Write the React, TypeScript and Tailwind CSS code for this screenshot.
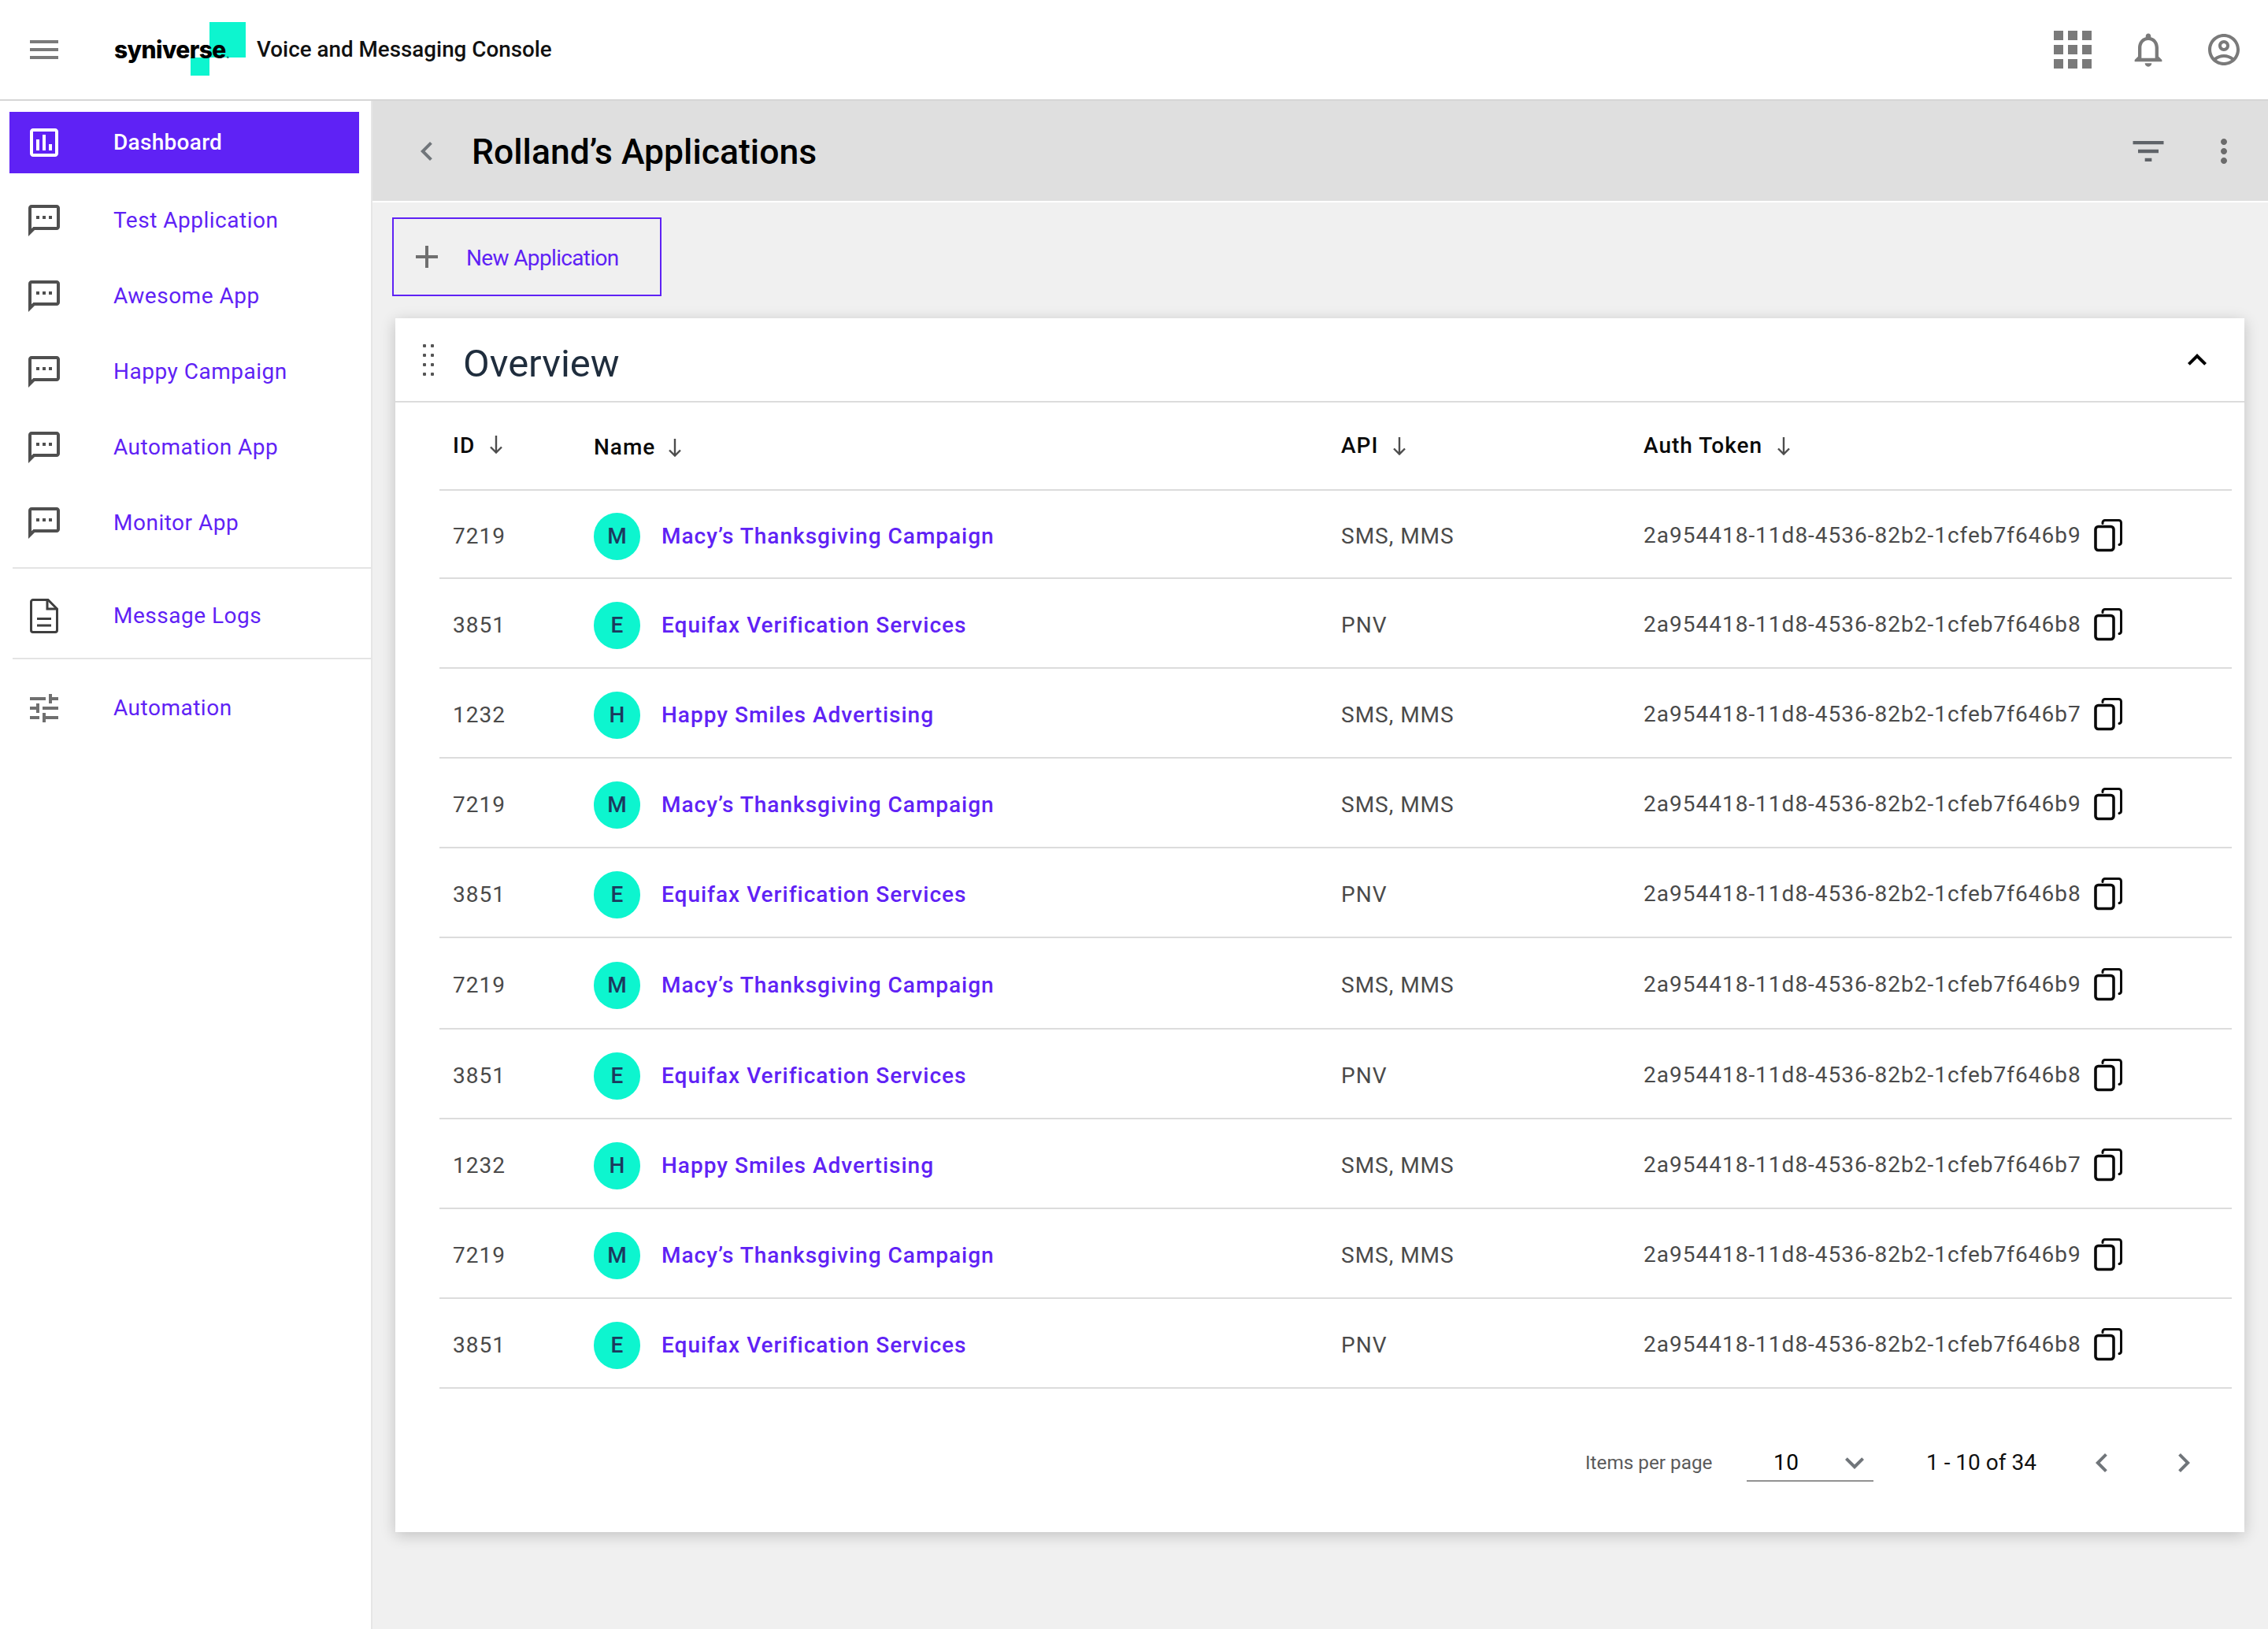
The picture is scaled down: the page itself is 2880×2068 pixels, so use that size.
import React from "react";

const P = {
  menu: "M3 18h18v-2H3v2zm0-5h18v-2H3v2zm0-7v2h18V6H3z",
  chart: "M19 3H5c-1.1 0-2 .9-2 2v14c0 1.1.9 2 2 2h14c1.1 0 2-.9 2-2V5c0-1.1-.9-2-2-2zm0 16H5V5h14v14zM7 10h2v7H7zm4-3h2v10h-2zm4 6h2v4h-2z",
  sms: "M20 2H4c-1.1 0-1.99.9-1.99 2L2 22l4-4h14c1.1 0 2-.9 2-2V4c0-1.1-.9-2-2-2zm0 14H5.17L4 17.17V4h16v12zM7 9h2v2H7zm4 0h2v2h-2zm4 0h2v2h-2z",
  tune: "M3 17v2h6v-2H3zM3 5v2h10V5H3zm10 16v-2h8v-2h-8v-2h-2v6h2zM7 9v2H3v2h4v2h2V9H7zm14 4v-2H11v2h10zm-6-4h2V7h4V5h-4V3h-2v6z",
  apps: "M4 8h4V4H4v4zm6 12h4v-4h-4v4zm-6 0h4v-4H4v4zm0-6h4v-4H4v4zm6 0h4v-4h-4v4zm6-10v4h4V4h-4zm-6 4h4V4h-4v4zm6 6h4v-4h-4v4zm0 6h4v-4h-4v4z",
  bell: "M12 22c1.1 0 2-.9 2-2h-4c0 1.1.9 2 2 2zm6-6v-5c0-3.07-1.63-5.64-4.5-6.32V4c0-.83-.67-1.5-1.5-1.5s-1.5.67-1.5 1.5v.68C7.64 5.36 6 7.92 6 11v5l-2 2v1h16v-1l-2-2zm-2 1H8v-6c0-2.48 1.51-4.5 4-4.5s4 2.02 4 4.5v6z",
  user: "M12 2C6.48 2 2 6.48 2 12s4.48 10 10 10 10-4.48 10-10S17.52 2 12 2zM7.35 18.5C8.66 17.56 10.26 17 12 17s3.34.56 4.65 1.5c-1.31.94-2.91 1.5-4.65 1.5s-3.34-.56-4.65-1.5zm10.79-1.38C16.45 15.8 14.32 15 12 15s-4.45.8-6.14 2.12C4.7 15.73 4 13.95 4 12c0-4.42 3.58-8 8-8s8 3.58 8 8c0 1.95-.7 3.73-1.86 5.12zM12 6c-1.93 0-3.5 1.57-3.5 3.5S10.07 13 12 13s3.5-1.57 3.5-3.5S13.93 6 12 6zm0 5c-.83 0-1.5-.67-1.5-1.5S11.17 8 12 8s1.5.67 1.5 1.5S12.83 11 12 11z",
  filter: "M10 18h4v-2h-4v2zM3 6v2h18V6H3zm3 7h12v-2H6v2z",
  more: "M12 8c1.1 0 2-.9 2-2s-.9-2-2-2-2 .9-2 2 .9 2 2 2zm0 2c-1.1 0-2 .9-2 2s.9 2 2 2 2-.9 2-2-.9-2-2-2zm0 6c-1.1 0-2 .9-2 2s.9 2 2 2 2-.9 2-2-.9-2-2-2z",
  left: "M15.41 7.41L14 6l-6 6 6 6 1.41-1.41L10.83 12z",
  right: "M10 6L8.59 7.41 13.17 12l-4.58 4.59L10 18l6-6z",
  up: "M12 8l-6 6 1.41 1.41L12 10.83l4.59 4.58L18 14z",
  down: "M16.59 8.59L12 13.17 7.41 8.59 6 10l6 6 6-6z",
  plus: "M19 13h-6v6h-2v-6H5v-2h6V5h2v6h6v2z",
};

function Icon({ d, className }: { d: string; className: string }) {
  return (
    <svg viewBox="0 0 24 24" fill="currentColor" className={className}>
      <path d={d} />
    </svg>
  );
}

function SortArrow({ className = "" }: { className?: string }) {
  return (
    <svg viewBox="0 0 18 24" fill="none" stroke="#4d4d4d" strokeWidth="2.4" className={`w-[18px] h-[24px] ${className}`}>
      <path d="M9 1v21M2 15.5l7 7 7-7" />
    </svg>
  );
}

function Copy() {
  return (
    <svg viewBox="0 0 38 42" fill="none" stroke="#0a0a0a" className="w-[38px] h-[42px] shrink-0">
      <rect x="2" y="9.5" width="23" height="30" rx="3.5" strokeWidth="3.6" />
      <path d="M11 5.5V4.5a3 3 0 0 1 3-3h17.5a3 3 0 0 1 3 3v25a3 3 0 0 1-2.5 3" strokeWidth="3" strokeLinecap="round" />
    </svg>
  );
}

function Doc() {
  return (
    <svg viewBox="0 0 36 44" fill="none" stroke="#3f3f3f" strokeWidth="3" className="w-[36px] h-[44px]">
      <path d="M4 1.5h19l11.5 11.5v27a2.5 2.5 0 0 1-2.5 2.5H4A2.5 2.5 0 0 1 1.5 40V4A2.5 2.5 0 0 1 4 1.5z" />
      <path d="M22 1.5V13h12.5M9 25.5h18M9 34h18" />
    </svg>
  );
}

function Grip() {
  return (
    <div className="grid grid-cols-2 gap-x-[6px] gap-y-[8px] w-[14px]">
      {Array.from({ length: 8 }).map((_, i) => (
        <span key={i} className="w-[4px] h-[4px] bg-[#555555] rounded-[1px]" />
      ))}
    </div>
  );
}

function NavItem({ label, icon }: { label: string; icon: React.ReactNode }) {
  return (
    <div className="flex items-center h-[96px]">
      <div className="w-[144px] pl-[32px] shrink-0">{icon}</div>
      <span className="text-[28px] tracking-[0.5px] text-[#5f22f5]">{label}</span>
    </div>
  );
}

const data = [
  ["7219", "M", "Macy’s Thanksgiving Campaign", "SMS, MMS", "2a954418-11d8-4536-82b2-1cfeb7f646b9"],
  ["3851", "E", "Equifax Verification Services", "PNV", "2a954418-11d8-4536-82b2-1cfeb7f646b8"],
  ["1232", "H", "Happy Smiles Advertising", "SMS, MMS", "2a954418-11d8-4536-82b2-1cfeb7f646b7"],
  ["7219", "M", "Macy’s Thanksgiving Campaign", "SMS, MMS", "2a954418-11d8-4536-82b2-1cfeb7f646b9"],
  ["3851", "E", "Equifax Verification Services", "PNV", "2a954418-11d8-4536-82b2-1cfeb7f646b8"],
  ["7219", "M", "Macy’s Thanksgiving Campaign", "SMS, MMS", "2a954418-11d8-4536-82b2-1cfeb7f646b9"],
  ["3851", "E", "Equifax Verification Services", "PNV", "2a954418-11d8-4536-82b2-1cfeb7f646b8"],
  ["1232", "H", "Happy Smiles Advertising", "SMS, MMS", "2a954418-11d8-4536-82b2-1cfeb7f646b7"],
  ["7219", "M", "Macy’s Thanksgiving Campaign", "SMS, MMS", "2a954418-11d8-4536-82b2-1cfeb7f646b9"],
  ["3851", "E", "Equifax Verification Services", "PNV", "2a954418-11d8-4536-82b2-1cfeb7f646b8"],
];

const cols = "grid grid-cols-[196px_949px_384px_1fr] items-center";
const smsIcon = <Icon d={P.sms} className="w-[48px] h-[48px] text-[#4f4f4f]" />;

export default function App() {
  return (
    <div className="w-[2880px] h-[2068px] bg-white font-['Roboto',sans-serif] flex flex-col overflow-hidden">
      <header className="h-[128px] shrink-0 flex items-center border-b-2 border-[#d6d6d6] bg-white">
        <div className="w-[145px] pl-[32px] shrink-0">
          <Icon d={P.menu} className="w-[48px] h-[48px] text-[#7a7a7a]" />
        </div>
        <div className="relative w-[181px] h-[126px] shrink-0 flex items-center">
          <div className="absolute left-[121px] top-[28px] w-[46px] h-[45px] bg-[#0df5cf]" />
          <div className="absolute left-[97px] top-[73px] w-[24px] h-[23px] bg-[#0df5cf]" />
          <span className="relative font-['Inter',sans-serif] font-extrabold text-[30px] tracking-[-0.6px] text-black">
            syniverse<span className="font-bold text-[15px] text-[#1f7f72]">.</span>
          </span>
        </div>
        <span className="text-[27.8px] font-medium text-[#111111]">Voice and Messaging Console</span>
        <div className="ml-auto flex items-center pr-[32px]">
          <Icon d={P.apps} className="w-[72px] h-[72px] text-[#7a7a7a]" />
          <Icon d={P.bell} className="ml-[34px] w-[52px] h-[52px] text-[#7a7a7a]" />
          <Icon d={P.user} className="ml-[46px] w-[48px] h-[48px] text-[#7a7a7a]" />
        </div>
      </header>

      <div className="flex flex-1 min-h-0">
        <aside className="w-[473px] shrink-0 border-r-2 border-[#e6e6e6] pt-[14px]">
          <div className="ml-[12px] w-[444px] h-[78px] bg-[#5f22f5] flex items-center">
            <div className="w-[132px] pl-[20px] shrink-0">
              <Icon d={P.chart} className="w-[48px] h-[48px] text-white" />
            </div>
            <span className="text-[28px] font-medium tracking-[0.3px] text-white">Dashboard</span>
          </div>
          <div className="mt-[12px]">
            <NavItem label="Test Application" icon={smsIcon} />
            <NavItem label="Awesome App" icon={smsIcon} />
            <NavItem label="Happy Campaign" icon={smsIcon} />
            <NavItem label="Automation App" icon={smsIcon} />
            <NavItem label="Monitor App" icon={smsIcon} />
          </div>
          <div className="ml-[16px] mt-[8px] h-[2px] bg-[#e4e4e4]" />
          <div className="mt-[12px]">
            <NavItem label="Message Logs" icon={<div className="pl-[6px]"><Doc /></div>} />
          </div>
          <div className="ml-[16px] mt-[5px] h-[2px] bg-[#e4e4e4]" />
          <div className="mt-[14px]">
            <NavItem label="Automation" icon={<Icon d={P.tune} className="w-[48px] h-[48px] text-[#6f6f6f]" />} />
          </div>
        </aside>

        <main className="flex-1 min-w-0 bg-[#f0f0f0]">
          <div className="h-[129px] bg-[#dfdfdf] border-b-2 border-white flex items-center">
            <div className="w-[126px] pl-[45px] shrink-0">
              <Icon d={P.left} className="w-[48px] h-[48px] text-[#70757a]" />
            </div>
            <h1 className="text-[44.5px] pt-[3px] font-medium text-black">Rolland’s Applications</h1>
            <div className="ml-auto flex items-center pr-[32px]">
              <Icon d={P.filter} className="w-[52px] h-[52px] text-[#5f6368]" />
              <Icon d={P.more} className="ml-[46px] w-[48px] h-[48px] text-[#6b6b6b]" />
            </div>
          </div>

          <div className="pt-[19px] pl-[25px]">
            <button className="w-[342px] h-[100px] border-2 border-[#5f22f5] flex items-center">
              <div className="w-[92px] pl-[18px] shrink-0">
                <Icon d={P.plus} className="w-[48px] h-[48px] text-[#6f6f6f]" />
              </div>
              <span className="text-[28px] pt-[3px] text-[#5f22f5] tracking-[-0.65px]">New Application</span>
            </button>
          </div>

          <section className="ml-[29px] mr-[30px] mt-[28px] bg-white shadow-[0_4px_18px_rgba(0,0,0,0.2)] h-[1541px]">
            <div className="h-[107px] border-b-2 border-[#dcdcdc] flex items-center">
              <div className="w-[86px] pl-[35px] shrink-0">
                <Grip />
              </div>
              <h2 className="text-[49px] pt-[10px] text-[#1f2d3d]">Overview</h2>
              <div className="ml-auto pr-[36px]">
                <Icon d={P.up} className="w-[48px] h-[48px] text-black" />
              </div>
            </div>

            <div className="ml-[56px] mr-[16px]">
              <div className={`${cols} h-[112px] border-b-2 border-[#dcdcdc] text-[28px] font-medium text-[#0a0a0a] tracking-[1px]`}>
                <div className="pl-[17px] flex items-center gap-[18px]"><span>ID</span><SortArrow className="-mt-[4px]" /></div>
                <div className="flex items-center gap-[16px] pt-[4px]"><span>Name</span><SortArrow /></div>
                <div className="flex items-center gap-[18px]"><span>API</span><SortArrow /></div>
                <div className="flex items-center gap-[18px]"><span>Auth Token</span><SortArrow /></div>
              </div>
              {data.map((r, i) => (
                <div key={i} className={`${cols} ${i === 0 ? "h-[112px]" : i === 5 ? "h-[116px]" : "h-[114px]"} pt-[6px] border-b-2 border-[#dcdcdc] text-[28px] text-[#4a4a4a] tracking-[1px]`}>
                  <div className="pl-[17px]">{r[0]}</div>
                  <div className="flex items-center gap-[27px]">
                    <div className="w-[59px] h-[60px] rounded-full bg-[#0df5cf] flex items-center justify-center font-medium text-[#1c3a5e] tracking-normal">{r[1]}</div>
                    <span className="font-medium text-[#5f22f5] tracking-[1px]">{r[2]}</span>
                  </div>
                  <div>{r[3]}</div>
                  <div className="flex items-center gap-[16px] pb-[3px]">
                    <span>{r[4]}</span>
                    <Copy />
                  </div>
                </div>
              ))}
            </div>

            <div className="flex items-center h-[94px] mt-[47px] pl-[1511px]">
              <span className="w-[205px] text-[24.3px] text-[#5a5a5a]">Items per page</span>
              <div className="w-[161px] h-[46px] mt-[2px] border-b-2 border-[#929292] flex items-center pl-[34px] justify-between">
                <span className="text-[28px] tracking-[0.5px] text-black">10</span>
                <Icon d={P.down} className="w-[48px] h-[48px] text-[#70757a]" />
              </div>
              <span className="ml-[67px] w-[199px] text-[28px] text-[#111111]">1 - 10 of 34</span>
              <Icon d={P.left} className="w-[48px] h-[48px] text-[#70757a]" />
              <Icon d={P.right} className="ml-[56px] w-[48px] h-[48px] text-[#70757a]" />
            </div>
          </section>
        </main>
      </div>
    </div>
  );
}
